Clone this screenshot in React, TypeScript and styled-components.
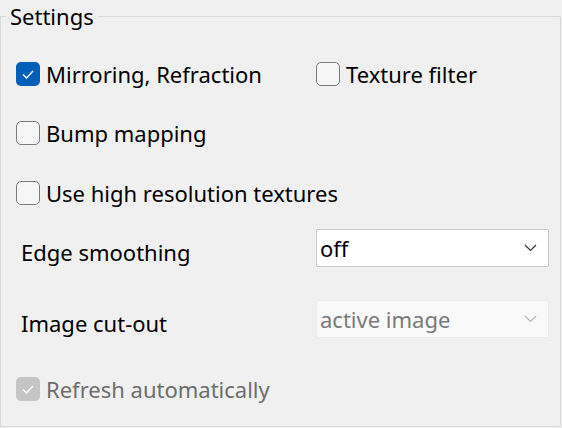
import React, { useState } from 'react';
import styled, { createGlobalStyle } from 'styled-components';

const GlobalStyle = createGlobalStyle`
  html, body {
    margin: 0;
    padding: 0;
    background: #f0f0f0;
  }
  body {
    width: 562px;
    height: 428px;
    overflow: hidden;
    font-family: "Noto Sans", "Open Sans", sans-serif;
    color: #000;
  }
`;

const Group = styled.fieldset`
  box-sizing: border-box;
  width: 561px;
  height: 427px;
  margin: 0;
  padding: 0 0 0 15px;
  border: 1px solid #d9d9d9;
  border-radius: 0 2px 2px 0;
  display: flex;
  flex-direction: column;
`;

const Legend = styled.legend`
  margin-left: -10px;
  padding: 0 4px;
  font-size: 22px;
  line-height: 32px;
`;

const Row = styled.div<{ $top: number; $align?: string }>`
  display: flex;
  align-items: ${({ $align }) => $align ?? 'center'};
  margin-top: ${({ $top }) => $top}px;
`;

const CheckLabel = styled.label<{ $width?: number; $disabled?: boolean }>`
  display: flex;
  align-items: center;
  gap: 6px;
  width: ${({ $width }) => ($width ? `${$width}px` : 'auto')};
  font-size: 22px;
  line-height: 26px;
  color: ${({ $disabled }) => ($disabled ? '#6d6d6d' : '#000')};
  cursor: ${({ $disabled }) => ($disabled ? 'default' : 'pointer')};
`;

const Box = styled.span<{ $checked: boolean; $disabled?: boolean }>`
  box-sizing: border-box;
  width: 24px;
  height: 24px;
  border-radius: 5px;
  display: flex;
  align-items: center;
  justify-content: center;
  flex-shrink: 0;
  background: ${({ $checked, $disabled }) =>
    $disabled ? '#c5c5c5' : $checked ? '#005fb8' : '#f6f6f6'};
  border: ${({ $checked, $disabled }) =>
    $checked || $disabled ? 'none' : '1.5px solid #7c7c7c'};
`;

const FieldLabel = styled.span`
  width: 295px;
  padding-left: 5px;
  font-size: 22px;
  line-height: 29px;
`;

const Select = styled.div<{ $disabled?: boolean }>`
  box-sizing: border-box;
  width: 233px;
  height: 38px;
  flex-shrink: 0;
  display: flex;
  align-items: center;
  justify-content: space-between;
  padding: 0 11px 0 3px;
  font-size: 22px;
  background: ${({ $disabled }) => ($disabled ? '#f9f9f9' : '#fff')};
  border: 1px solid ${({ $disabled }) => ($disabled ? '#ececec' : '#cccccc')};
  border-radius: 2px;
  color: ${({ $disabled }) => ($disabled ? '#7a7a7a' : '#000')};
`;

const Check = ({ color }: { color: string }) => (
  <svg width="14" height="14" viewBox="0 0 14 14">
    <polyline points="2,7.5 5.5,11 12,4" fill="none" stroke={color} strokeWidth="1.4" />
  </svg>
);

const Chevron = ({ color }: { color: string }) => (
  <svg width="13" height="8" viewBox="0 0 13 8">
    <polyline points="1,1 6.5,6.5 12,1" fill="none" stroke={color} strokeWidth="1.2" />
  </svg>
);

type CheckboxProps = {
  label: string;
  checked: boolean;
  disabled?: boolean;
  width?: number;
  onToggle?: () => void;
};

const Checkbox = ({ label, checked, disabled, width, onToggle }: CheckboxProps) => (
  <CheckLabel $width={width} $disabled={disabled} onClick={disabled ? undefined : onToggle}>
    <Box $checked={checked} $disabled={disabled}>
      {checked && <Check color="#fff" />}
    </Box>
    {label}
  </CheckLabel>
);

const App = () => {
  const [mirror, setMirror] = useState(true);
  const [texture, setTexture] = useState(false);
  const [bump, setBump] = useState(false);
  const [highRes, setHighRes] = useState(false);

  return (
    <>
      <GlobalStyle />
      <Group>
        <Legend>Settings</Legend>
        <Row $top={29}>
          <Checkbox
            label="Mirroring, Refraction"
            checked={mirror}
            width={300}
            onToggle={() => setMirror(v => !v)}
          />
          <Checkbox label="Texture filter" checked={texture} onToggle={() => setTexture(v => !v)} />
        </Row>
        <Row $top={33}>
          <Checkbox label="Bump mapping" checked={bump} onToggle={() => setBump(v => !v)} />
        </Row>
        <Row $top={34}>
          <Checkbox
            label="Use high resolution textures"
            checked={highRes}
            onToggle={() => setHighRes(v => !v)}
          />
        </Row>
        <Row $top={23} $align="flex-end">
          <FieldLabel>Edge smoothing</FieldLabel>
          <Select>
            off
            <Chevron color="#333" />
          </Select>
        </Row>
        <Row $top={33} $align="flex-end">
          <FieldLabel>Image cut-out</FieldLabel>
          <Select $disabled>
            active image
            <Chevron color="#b5b5b5" />
          </Select>
        </Row>
        <Row $top={38}>
          <Checkbox label="Refresh automatically" checked disabled />
        </Row>
      </Group>
    </>
  );
};

export default App;
